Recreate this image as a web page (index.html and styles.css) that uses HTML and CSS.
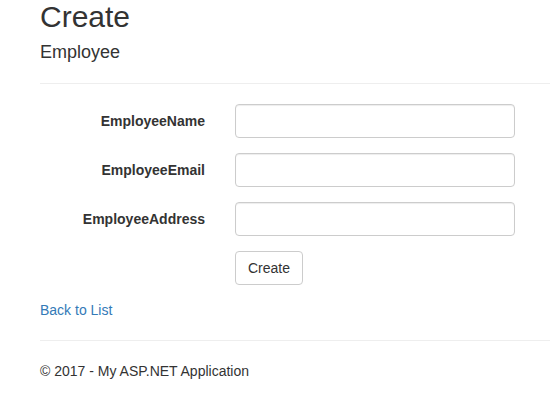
FILE: index.html
```html
<!DOCTYPE html>
<html lang="en">
  <head>
    <meta charset="UTF-8" />
    <title>Create - My ASP.NET Application</title>
    <link rel="stylesheet" href="styles.css">
  </head>
  <body>
    <div class="body-content">
      <h2>Create</h2>

      <form class="form-horizontal">
        <h4>Employee</h4>
        <hr />

        <div class="form-group">
          <label class="control-label" for="EmployeeName">EmployeeName</label>
          <div class="field">
            <input type="text" class="form-control" id="EmployeeName" />
          </div>
        </div>

        <div class="form-group">
          <label class="control-label" for="EmployeeEmail">EmployeeEmail</label>
          <div class="field">
            <input type="text" class="form-control" id="EmployeeEmail" />
          </div>
        </div>

        <div class="form-group">
          <label class="control-label" for="EmployeeAddress">EmployeeAddress</label>
          <div class="field">
            <input type="text" class="form-control" id="EmployeeAddress" />
          </div>
        </div>

        <div class="form-group">
          <div class="field field-offset">
            <button type="submit" class="btn btn-default">Create</button>
          </div>
        </div>
      </form>

      <div>
        <a href="#">Back to List</a>
      </div>

      <hr />
      <footer>
        <p>&copy; 2017 - My ASP.NET Application</p>
      </footer>
    </div>
  </body>
</html>
```

FILE: styles.css
```css
body {
  margin: 0;
  font-family: "Liberation Sans", Arial, sans-serif;
  font-size: 14px;
  line-height: 1.42857143;
  color: #333;
  background: #fff;
}

.body-content {
  padding-left: 40px;
}

h2 {
  margin: 0 0 10px;
  font-size: 30px;
  font-weight: 500;
  line-height: 1.1;
}

h4 {
  margin: 10px 0;
  font-size: 18px;
  font-weight: 500;
  line-height: 1.1;
}

hr {
  margin: 20px 0;
  border: 0;
  border-top: 1px solid #eee;
}

.form-group {
  display: grid;
  grid-template-columns: 180px 1fr;
  margin-bottom: 15px;
}

.control-label {
  padding-top: 7px;
  padding-right: 15px;
  text-align: right;
  font-weight: bold;
}

.field {
  padding-left: 15px;
}

.field-offset {
  grid-column: 2;
}

.form-control {
  display: block;
  box-sizing: border-box;
  width: 100%;
  max-width: 280px;
  height: 34px;
  padding: 6px 12px;
  font-family: inherit;
  font-size: 14px;
  color: #555;
  background: #fff;
  border: 1px solid #ccc;
  border-radius: 4px;
  box-shadow: inset 0 1px 1px rgba(0, 0, 0, 0.075);
}

.btn {
  display: inline-block;
  height: 34px;
  padding: 6px 12px;
  font-family: inherit;
  font-size: 14px;
  line-height: 1.42857143;
  border-radius: 4px;
  cursor: pointer;
}

.btn-default {
  color: #333;
  background: #fff;
  border: 1px solid #ccc;
}

a {
  color: #337ab7;
  text-decoration: none;
}

footer p {
  margin: 0 0 10px;
}
```
